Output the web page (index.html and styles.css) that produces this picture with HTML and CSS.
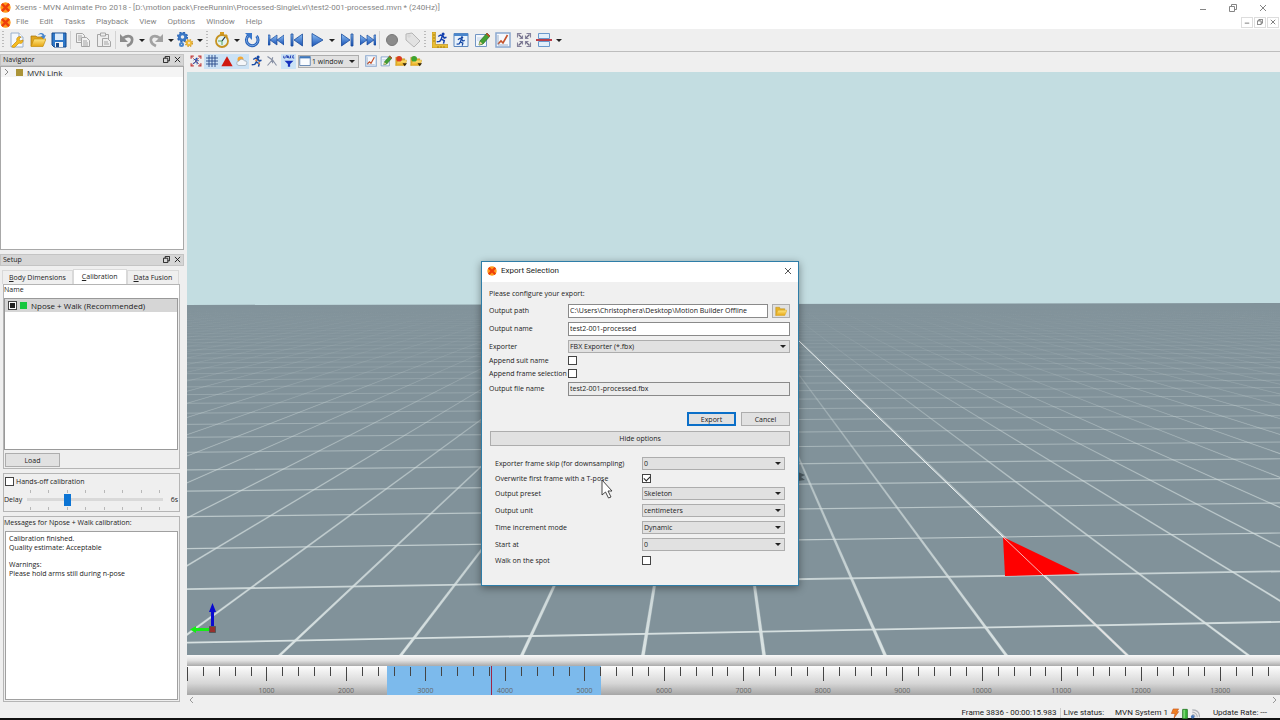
FILE: index.html
```html
<!DOCTYPE html>
<html lang="en">
<head>
<meta charset="utf-8">
<title>Xsens - MVN Animate Pro 2018</title>
<link rel="stylesheet" href="styles.css">
</head>
<body>
<svg class="defs" aria-hidden="true">
  <defs>
    <linearGradient id="blue" x1="0" y1="0" x2="0" y2="1"><stop offset="0" stop-color="#8ec0f5"/><stop offset="1" stop-color="#1650b4"/></linearGradient>
    <linearGradient id="gold" x1="0" y1="0" x2="0" y2="1"><stop offset="0" stop-color="#ffe680"/><stop offset="1" stop-color="#e6a512"/></linearGradient>
  </defs>
  <symbol id="logo" viewBox="0 0 16 16"><circle cx="8" cy="8" r="7.5" fill="#ff9a1c"/><path d="M4 1.500l4 4 4-4 2.500 2.500-4 4 4 4-2.500 2.500-4-4-4 4L1.500 12l4-4-4-4z" fill="#ee3f0c"/></symbol>
  <symbol id="new" viewBox="0 0 16 16"><path d="M2 1h8l4 4v10H2z" fill="#f4f8fd" stroke="#9ab0cc"/><path d="M10 1v4h4" fill="#fff" stroke="#9ab0cc"/><path d="M3 14l5-5c-1-3 1-5 4-4l-2 2 1 2 3-1c0 3-2 4-4 3l-4 4c-1 1-4 0-3-1z" fill="#f5bd22" stroke="#c98a08" stroke-width=".7"/></symbol>
  <symbol id="open" viewBox="0 0 16 16"><path d="M1 14V4h5l1 1h6v3" fill="#e0a51c" stroke="#a57408" stroke-width=".7"/><path d="M1 14.500L4 7h12l-3 7.500z" fill="url(#gold)" stroke="#c28c0c" stroke-width=".7"/><path d="M8 3c2-3 6-2.500 6.500.5L16 3l-2 4-3.500-3 2-.2C12 2 10 2 8 3z" fill="#4686d0"/></symbol>
  <symbol id="folder" viewBox="0 0 16 16"><path d="M1 14V3h5l1 2h6v3" fill="#e6b128" stroke="#b5860f" stroke-width=".6"/><path d="M1 14l3-7h12l-3 7z" fill="url(#gold)" stroke="#d5a020" stroke-width=".6"/></symbol>
  <symbol id="save" viewBox="0 0 16 16"><path d="M1 1h14v14H3l-2-2z" fill="#2f78c8" stroke="#14488c"/><path d="M4 1.500h8V8H4z" fill="#dcebfa"/><path d="M4 10h8v5H4z" fill="#f4f4f4"/><path d="M5 11h3v4H5z" fill="#184a8c"/></symbol>
  <symbol id="copy" viewBox="0 0 16 16"><g fill="#f1f1f1" stroke="#a5a5a5"><path d="M1.500 1.500h6l2 2v7h-8z"/><path d="M6.500 5.500h5l3 3v6h-8z"/><path d="M8 9h4M8 11h5M8 13h5M3 4h4M3 6h3M3 8h3"/></g></symbol>
  <symbol id="paste" viewBox="0 0 16 16"><g fill="#eee" stroke="#a5a5a5"><path d="M1.500 2.500h11v12h-11z"/><path d="M4.500 1h5v3h-5z"/><path d="M6.500 6.500h5l3 3v5h-8z"/><path d="M8 10h4M8 12h5"/></g></symbol>
  <symbol id="undo" viewBox="0 0 16 16"><path d="M4 6c6-4 10-1 9 3-.5 3-3 4-5 5" fill="none" stroke="#8c8c8c" stroke-width="2.600"/><path d="M1 2v8h8z" fill="#8c8c8c"/></symbol>
  <symbol id="redo" viewBox="0 0 16 16"><path d="M12 6C6 2 2 5 3 9c.5 3 3 4 5 5" fill="none" stroke="#a2a2a2" stroke-width="2.600"/><path d="M15 2v8H7z" fill="#a2a2a2"/></symbol>
  <symbol id="gears" viewBox="0 0 16 16"><circle cx="5.500" cy="5" r="3.200" fill="none" stroke="#3a78c6" stroke-width="2.800"/><circle cx="5.500" cy="5" r="4.800" fill="none" stroke="#2c65b4" stroke-width="1.500" stroke-dasharray="2 1.770"/><circle cx="12" cy="11" r="2" fill="none" stroke="#f0bc3c" stroke-width="2.200"/><circle cx="12" cy="11" r="3.400" fill="none" stroke="#d29a26" stroke-width="1.300" stroke-dasharray="1.500 1.200"/><circle cx="4.500" cy="12.500" r="1.500" fill="none" stroke="#4a86cc" stroke-width="2"/></symbol>
  <symbol id="watch" viewBox="0 0 16 16"><path d="M6 0h4v3H6zM12 2l2 2-1 1-2-2z" fill="#d79c1e"/><circle cx="8" cy="9" r="6" fill="#e2f2f0" stroke="#c69220" stroke-width="1.800"/><path d="M8 9l3-4" stroke="#234" stroke-width="1.200"/><path d="M8 9v4M8 9H4" stroke="#58a45c"/></symbol>
  <symbol id="loop" viewBox="0 0 16 16"><path d="M4.500 3.500a5.800 5.800 0 1 0 8 .5" fill="none" stroke="#2861b8" stroke-width="3"/><path d="M4.500 3.500a5.800 5.800 0 1 0 8 .5" fill="none" stroke="#78a9e4" stroke-width="1"/><path d="M1 1h7v7z" fill="#3a78cc"/></symbol>
  <symbol id="first" viewBox="0 0 16 16"><path d="M0 3h2v10H0zM9 3v10L2 8zM16 3v10L9 8z" fill="url(#blue)" stroke="#1b4c9c" stroke-width=".7"/></symbol>
  <symbol id="prev" viewBox="0 0 16 16"><path d="M2 2h2v12H2zM13.500 2v12L5 8z" fill="url(#blue)" stroke="#1b4c9c" stroke-width=".8"/></symbol>
  <symbol id="play" viewBox="0 0 16 16"><path d="M3 1.500v13L14 8z" fill="url(#blue)" stroke="#1b4c9c" stroke-width=".8"/></symbol>
  <symbol id="next" viewBox="0 0 16 16"><path d="M12 2h2v12h-2zM2.500 2v12L11 8z" fill="url(#blue)" stroke="#1b4c9c" stroke-width=".8"/></symbol>
  <symbol id="last" viewBox="0 0 16 16"><path d="M14 3h2v10h-2zM7 3v10l7-5zM0 3v10l7-5z" fill="url(#blue)" stroke="#1b4c9c" stroke-width=".7"/></symbol>
  <symbol id="rec" viewBox="0 0 16 16"><circle cx="8" cy="8" r="5.500" fill="#8b8b8b" stroke="#777"/></symbol>
  <symbol id="tag" viewBox="0 0 16 16"><path d="M1 2l6-1 8 8-6 6-8-7z" fill="#e2e2e2" stroke="#b5b5b5"/><circle cx="4" cy="4" r="1" fill="#fff" stroke="#aaa" stroke-width=".5"/></symbol>
  <symbol id="man" viewBox="0 0 16 16"><circle cx="9.500" cy="2.500" r="2"/><path d="M3 6l3-2 3 1 2 3 3-1M8.500 5L7 9.500l4 2-1 4M7 9.500l-2 3-4 .5" fill="none" stroke="currentColor" stroke-width="2"/></symbol>
  <symbol id="ruler" viewBox="0 0 16 16"><path d="M0 0h3.500v12.500H16V16H0z" fill="#e9bd35" stroke="#b68a14" stroke-width=".6"/><path d="M1 3h2M1 6h2M1 9h2M6 14v2M9 14v2M12 14v2" stroke="#8c6808" stroke-width=".7"/><svg x="4" y="0" width="12" height="12" color="#123fae" fill="#123fae"><use href="#man"/></svg></symbol>
  <symbol id="winman" viewBox="0 0 16 16"><path d="M1 1.500h14v13H1z" fill="#e8f2fc" stroke="#5b86bd"/><path d="M1 1.500h14v2.500H1z" fill="#4a86cc"/><svg x="3" y="4" width="10" height="10" color="#1246a4" fill="#1246a4"><use href="#man"/></svg></symbol>
  <symbol id="edit" viewBox="0 0 16 16"><path d="M1.500 2.500h11v12h-11z" fill="#f3f7fc" stroke="#7296c4"/><path d="M3 6h7M3 8h6" stroke="#c4d4e8"/><path d="M5 13l1-4 7-8 3 3-7 8z" fill="#43a033" stroke="#266b1c" stroke-width=".7"/><path d="M5 13l1-3.500 2.500 2z" fill="#f2d09a"/><path d="M13 1l3 3-1 1-3-3z" fill="#d43e2a"/></symbol>
  <symbol id="chart" viewBox="0 0 16 16"><path d="M1 1h14v14H1z" fill="#f6f9fd" stroke="#8ba8cf" stroke-width="1.500"/><path d="M3 12l3-3 2 2 4.500-8" fill="none" stroke="#c4512a" stroke-width="1.600"/><path d="M3 3v10h10" stroke="#7a94b5" fill="none" stroke-width=".7"/></symbol>
  <symbol id="expand" viewBox="0 0 16 16"><path d="M2.500 2.500l4 4M13.500 2.500l-4 4M13.500 13.500l-4-4M2.500 13.500l4-4" stroke="#6d6a84" stroke-width="1.400"/><path d="M1.500 5.500v-4h4M10.500 1.500h4v4M14.500 10.500v4h-4M5.500 14.500h-4v-4M6.500 3.500v3h-3M9.500 3.500v3h3M6.500 12.500v-3h-3M9.500 12.500v-3h3" fill="none" stroke="#85829c" stroke-width="1.100"/></symbol>
  <symbol id="split" viewBox="0 0 16 16"><path d="M2.500 1.500h11v5h-11zM2.500 9.500h11v5h-11z" fill="#e2effa" stroke="#6a98cc"/><path d="M0 8h16" stroke="#b32a36" stroke-width="1.800"/></symbol>
  <symbol id="fitman" viewBox="0 0 16 16"><path d="M1.500 5V1.500H5M11 1.500h3.500V5M14.500 11v3.500H11M5 14.500H1.500V11" fill="none" stroke="#c23a3a" stroke-width="1.600"/><path d="M3 3l10 10M13 3L3 13" stroke="#c64b50"/><svg x="3" y="3" width="10" height="10" color="#1a49a8" fill="#1a49a8"><use href="#man"/></svg></symbol>
  <symbol id="grid" viewBox="0 0 16 16"><path d="M4 0v16M8 0v16M12 0v16M0 4h16M0 8h16M0 12h16" stroke="#26488a" stroke-width="1.200"/></symbol>
  <symbol id="tri" viewBox="0 0 16 16"><path d="M8 1.500L15.500 15H.5z" fill="#cf1910"/></symbol>
  <symbol id="cloud" viewBox="0 0 16 16"><circle cx="6" cy="6" r="4" fill="#f4a732"/><path d="M4 14a3 3 0 0 1 0-6 4 4 0 0 1 7-.5A3.300 3.300 0 0 1 12 14z" fill="#f4f6f9" stroke="#9aa5b2"/></symbol>
  <symbol id="runner" viewBox="0 0 16 16"><g color="#194ba5" fill="#194ba5"><use href="#man"/></g><circle cx="7" cy="7" r="1.500" fill="#f48928"/><circle cx="11" cy="11" r="1.200" fill="#f48928"/></symbol>
  <symbol id="bones" viewBox="0 0 16 16"><path d="M2 2l7 5 5 7M9 3L8 7l-6 7M5 4l3 3 1 4" fill="none" stroke="#8790a4" stroke-width="1.400"/></symbol>
  <symbol id="labels" viewBox="0 0 16 16"><path d="M1 1v3h2M4 4V1h2v3M7.500 1v3h1.500M11 1h-1v3h1M14.500 1H13v3h2" fill="none" stroke="#1b38b0" stroke-width="1.200"/><path d="M2 7.500h12L9.500 12v3.500h-3V12z" fill="#1430bd"/></symbol>
  <symbol id="window" viewBox="0 0 16 16"><path d="M1 2h14v12H1z" fill="#fafcff" stroke="#416ca4"/><path d="M1 2h14v2.500H1z" fill="#3f78bd"/></symbol>
  <symbol id="fred" viewBox="0 0 16 16"><use href="#folder"/><circle cx="5.500" cy="5" r="3.800" fill="#da3c20"/><path d="M10 11h6l-3 4z" fill="#332508"/></symbol>
  <symbol id="fgreen" viewBox="0 0 16 16"><use href="#folder"/><circle cx="5.500" cy="5" r="3.800" fill="#3ca32f"/><path d="M10 11h6l-3 4z" fill="#332508"/></symbol>
  <symbol id="x" viewBox="0 0 8 8"><path d="M1 1l6 6M7 1L1 7" fill="none" stroke="currentColor"/></symbol>
  <symbol id="restore" viewBox="0 0 8 8"><path d="M.5 2.500h5v5h-5zM2.500 2.500v-2h5v5h-2" fill="none" stroke="currentColor"/></symbol>
  <symbol id="min" viewBox="0 0 8 8"><path d="M1 5.500h6" stroke="currentColor"/></symbol>
</svg>

<header class="titlebar">
  <svg class="logo"><use href="#logo"/></svg>
  <span class="grow">Xsens - MVN Animate Pro 2018 - [D:\motion pack\FreeRunnin\Processed-SingleLvl\test2-001-processed.mvn * (240Hz)]</span>
  <div class="winbtns">
    <button aria-label="Minimize"><svg><use href="#min"/></svg></button>
    <button aria-label="Restore"><svg><use href="#restore"/></svg></button>
    <button aria-label="Close"><svg><use href="#x"/></svg></button>
  </div>
</header>
<nav class="menubar">
  <svg class="logo"><use href="#logo"/></svg>
  <div class="menus grow">
    <button>File</button><button>Edit</button><button>Tasks</button><button>Playback</button><button>View</button><button>Options</button><button>Window</button><button>Help</button>
  </div>
  <div class="docbtns">
    <button aria-label="Minimize document"><svg><use href="#min"/></svg></button>
    <button aria-label="Restore document"><svg><use href="#restore"/></svg></button>
    <button aria-label="Close document"><svg><use href="#x"/></svg></button>
  </div>
</nav>
<div class="toolbar">
  <i class="handle first"></i>
  <button aria-label="New"><svg><use href="#new"/></svg></button>
  <button aria-label="Open"><svg><use href="#open"/></svg></button>
  <button aria-label="Save"><svg><use href="#save"/></svg></button>
  <i class="sep"></i>
  <button aria-label="Copy"><svg><use href="#copy"/></svg></button>
  <button aria-label="Paste"><svg><use href="#paste"/></svg></button>
  <i class="sep"></i>
  <button class="drop" aria-label="Undo"><svg><use href="#undo"/></svg></button>
  <button class="drop" aria-label="Redo"><svg><use href="#redo"/></svg></button>
  <button class="drop" aria-label="Process"><svg><use href="#gears"/></svg></button>
  <i class="handle"></i>
  <button class="drop" aria-label="Speed"><svg><use href="#watch"/></svg></button>
  <button aria-label="Loop"><svg><use href="#loop"/></svg></button>
  <i class="sep blank"></i>
  <button aria-label="First frame"><svg><use href="#first"/></svg></button>
  <button aria-label="Previous frame"><svg><use href="#prev"/></svg></button>
  <button class="drop" aria-label="Play"><svg><use href="#play"/></svg></button>
  <button aria-label="Next frame"><svg><use href="#next"/></svg></button>
  <button aria-label="Last frame"><svg><use href="#last"/></svg></button>
  <i class="sep"></i>
  <button aria-label="Record"><svg><use href="#rec"/></svg></button>
  <button aria-label="Marker"><svg><use href="#tag"/></svg></button>
  <i class="handle tight"></i>
  <button aria-label="Dimensions"><svg><use href="#ruler"/></svg></button>
  <button aria-label="Character window"><svg><use href="#winman"/></svg></button>
  <button aria-label="Edit"><svg><use href="#edit"/></svg></button>
  <button aria-label="Graph"><svg><use href="#chart"/></svg></button>
  <button aria-label="Fit"><svg><use href="#expand"/></svg></button>
  <button class="drop" aria-label="Split view"><svg><use href="#split"/></svg></button>
</div>

<main class="workspace">
  <aside class="side">
    <section class="dock nav">
      <h2><span class="grow">Navigator</span><button aria-label="Float Navigator"><svg><use href="#restore"/></svg></button><button aria-label="Close Navigator"><svg><use href="#x"/></svg></button></h2>
      <div class="tree"><div class="node"><svg class="chev" viewBox="0 0 6 8"><path d="M1 1l3 3-3 3" fill="none" stroke="#888"/></svg><i></i>MVN Link</div></div>
    </section>
    <section class="dock setup">
      <h2><span class="grow">Setup</span><button aria-label="Float Setup"><svg><use href="#restore"/></svg></button><button aria-label="Close Setup"><svg><use href="#x"/></svg></button></h2>
      <div class="tabs" role="tablist">
        <button role="tab"><u>B</u>ody Dimensions</button><button role="tab" class="on" aria-selected="true"><u>C</u>alibration</button><button role="tab"><u>D</u>ata Fusion</button>
      </div>
      <div class="group">
        <div class="colname">Name</div>
        <div class="list"><label class="item"><input type="checkbox" class="partial"><i></i>Npose + Walk (Recommended)</label></div>
        <button class="btn load">Load</button>
      </div>
      <div class="group delay">
        <label class="hands"><input type="checkbox">Hands-off calibration</label>
        <div class="sliderrow">
          <label for="delay">Delay</label>
          <div class="slider">
            <div class="ticks"><i></i><i></i><i></i><i></i><i></i><i></i><i></i><i></i></div>
            <input type="range" id="delay" min="0" max="7" value="2">
            <div class="ticks"><i></i><i></i><i></i><i></i><i></i><i></i><i></i><i></i></div>
          </div>
          <output for="delay">6s</output>
        </div>
      </div>
      <div class="group messages">
        <div class="msghead">Messages for Npose + Walk calibration:</div>
        <div class="msgbox"><p>Calibration finished.<br>Quality estimate: Acceptable</p><p>Warnings:<br>Please hold arms still during n-pose</p></div>
      </div>
    </section>
  </aside>

  <section class="stage">
    <div class="viewbar">
      <button class="lead" aria-label="Fit character"><svg><use href="#fitman"/></svg></button>
      <button class="on" aria-label="Grid"><svg><use href="#grid"/></svg></button>
      <button class="on" aria-label="Origin"><svg><use href="#tri"/></svg></button>
      <button class="on" aria-label="Sky"><svg><use href="#cloud"/></svg></button>
      <button aria-label="Character"><svg><use href="#runner"/></svg></button>
      <button aria-label="Skeleton"><svg><use href="#bones"/></svg></button>
      <button class="on labels" aria-label="Labels"><svg><use href="#labels"/></svg></button>
      <div class="select winsel"><svg><use href="#window"/></svg><select aria-label="Layout"><option>1 window</option></select></div>
      <button aria-label="Plot"><svg><use href="#chart"/></svg></button>
      <button aria-label="Edit plot"><svg><use href="#edit"/></svg></button>
      <button aria-label="Load layout"><svg><use href="#fred"/></svg></button>
      <button aria-label="Save layout"><svg><use href="#fgreen"/></svg></button>
    </div>
    <svg class="scene" viewBox="187 72 1093 583" preserveAspectRatio="xMidYMid slice" role="img" aria-label="3D view">
      <defs>
        <linearGradient id="fade" gradientUnits="userSpaceOnUse" x1="0" y1="304" x2="0" y2="655">
          <stop offset="0" stop-color="#d3dede" stop-opacity="0"/><stop offset=".2" stop-color="#d3dede" stop-opacity=".18"/><stop offset=".5" stop-color="#d3dede" stop-opacity=".6"/><stop offset="1" stop-color="#dbe4e4" stop-opacity="1"/>
        </linearGradient>
        <clipPath id="floorclip"><path d="M187 305L1280 303V655H187z"/></clipPath>
      </defs>
      <path d="M187 72h1093v583H187z" fill="#c3dde1"/>
      <path d="M187 305L1280 303V655H187z" fill="#81929a"/>
      <g id="floor" clip-path="url(#floorclip)" fill="url(#fade)" stroke="url(#fade)"></g>
      <path d="M798 340L1003 537" stroke="#f2f6f6"/>
      <path d="M1003 537l77 37-75 2z" fill="#f00"/>
      <path d="M1003 537l40 38 84 80" stroke="#f4e4e4" fill="none" stroke-width=".8"/>
      <path d="M798 472l7 3-4 2 4 3-7 1z" fill="#4c5a60"/>
      <path d="M212 628h-16v-2l-6 3.500 6 3.500v-2h16z" fill="#14ee14"/>
      <path d="M211 627v-15h-2l3.500-9 3.500 9h-2v15z" fill="#0a0ad0"/>
      <path d="M209.500 626.500h6v6h-6z" fill="#96302c" stroke="#555"/>
    </svg>
    <div class="rail"></div>
    <div class="timeline" id="timeline"><div class="selection"></div></div>
    <div class="hscroll"><svg viewBox="0 0 6 8"><path d="M4 1L1 4l3 3" fill="none" stroke="#999"/></svg><svg viewBox="0 0 6 8"><path d="M1 1l3 3-3 3" fill="none" stroke="#999"/></svg></div>
  </section>
</main>
<footer class="status">
  <span class="frame">Frame 3836 - 00:00:15.983</span><span class="live">Live status:</span><span>MVN System 1</span>
  <svg class="bolt" viewBox="0 0 10 12"><path d="M3 1h6L7 4h2L4 11l1-5H1z" fill="#f08022" stroke="#c04a10" stroke-width=".6"/></svg>
  <svg viewBox="0 0 10 12"><path d="M2.500 1.500h5v10h-5z" fill="#3fbb3c" stroke="#257a24"/><path d="M4 2v9" stroke="#aaf0a0"/></svg>
  <svg viewBox="0 0 10 12"><path d="M2 2c5 0 8 3 8 8M2 4.500c3 0 5.500 2.500 5.500 5.500M2 7c2 0 3 1 3 3" fill="none" stroke="#b0b4b8" stroke-width="1.200"/><circle cx="2.500" cy="9.500" r="2" fill="#4878b8"/></svg>
  <span class="rate">Update Rate: ---</span>
</footer>

<div class="dialog" role="dialog" aria-label="Export Selection">
  <div class="dtitle"><svg class="logo"><use href="#logo"/></svg><span class="grow">Export Selection</span><button aria-label="Close dialog"><svg><use href="#x"/></svg></button></div>
  <form class="dbody">
    <p>Please configure your export:</p>
    <div class="fields">
      <label for="path">Output path</label><div class="pathrow"><input type="text" id="path" value="C:\Users\Christophera\Desktop\Motion Builder Offline"><button type="button" class="btn" aria-label="Browse"><svg><use href="#folder"/></svg></button></div>
      <label for="name">Output name</label><input type="text" id="name" value="test2-001-processed">
      <label for="exp">Exporter</label><div class="select"><select id="exp"><option>FBX Exporter (*.fbx)</option></select></div>
      <label for="suit">Append suit name</label><input type="checkbox" id="suit">
      <label for="fsel">Append frame selection</label><input type="checkbox" id="fsel">
      <label for="file">Output file name</label><input type="text" id="file" class="ro" readonly value="test2-001-processed.fbx">
    </div>
    <div class="actions"><button type="button" class="btn default">Export</button><button type="button" class="btn">Cancel</button></div>
    <button type="button" class="btn hide">Hide options</button>
    <div class="options">
      <label for="skip">Exporter frame skip (for downsampling)</label><div class="select"><select id="skip"><option>0</option></select></div>
      <label for="tpose">Overwrite first frame with a T-pose</label><input type="checkbox" id="tpose" checked>
      <label for="preset">Output preset</label><div class="select"><select id="preset"><option>Skeleton</option></select></div>
      <label for="unit">Output unit</label><div class="select"><select id="unit"><option>centimeters</option></select></div>
      <label for="mode">Time increment mode</label><div class="select"><select id="mode"><option>Dynamic</option></select></div>
      <label for="start">Start at</label><div class="select"><select id="start"><option>0</option></select></div>
      <label for="spot">Walk on the spot</label><input type="checkbox" id="spot">
    </div>
  </form>
</div>
<svg class="cursor" viewBox="0 0 12 20"><path d="M1 1v15l3.500-3 3 6 2.500-1-3-6H11z" fill="#fff" stroke="#333" stroke-width=".9"/></svg>
<script src="app.js"></script>
</body>
</html>
```

FILE: app.js
```js
// Floor grid: one set of lines meets at a vanishing point, the other tilts slightly.
const NS = 'http://www.w3.org/2000/svg';
const floor = document.getElementById('floor');
const vp = { x: 709, y: 253 };
function add(d, width) {
  const p = document.createElementNS(NS, 'path');
  p.setAttribute('d', d);
  p.setAttribute('stroke-width', width);
  floor.appendChild(p);
}
for (let i = -30; i <= 40; i++) {
  const x = 280 + i * 121;
  const half = 1.6;
  add(`M${vp.x} ${vp.y}L${x - half} 655H${x + half}z`, 0.3);
}
for (let k = 0; k < 44; k++) {
  const y = vp.y + 1 / (0.002604 + 0.000414 * k);
  const slope = -(y - 267) * 0.0000513;
  const a = y + slope * (187 - 481);
  const b = y + slope * (1280 - 481);
  add(`M187 ${a}L1280 ${b}`, k < 2 ? 1.8 : k < 6 ? 1.2 : 1);
}

// Timeline ruler: a labelled mark every 1000 frames, five ticks in each.
const timeline = document.getElementById('timeline');
for (let n = 0; n <= 13; n++) {
  const unit = document.createElement('div');
  unit.className = 'unit';
  unit.innerHTML = '<i></i><i></i><i></i><i></i><i></i>' + (n ? '<span>' + n * 1000 + '</span>' : '');
  timeline.appendChild(unit);
}
const head = document.createElement('div');
head.className = 'playhead';
timeline.appendChild(head);
```

FILE: styles.css
```css
* { box-sizing: border-box; }
body {
  margin: 0; min-height: 100vh; display: flex; flex-direction: column;
  background: #efefef; color: #222; position: relative; overflow: hidden;
  font: 7px/9px "Open Sans", "Noto Sans", sans-serif;
}
button, input, select { font: inherit; color: inherit; margin: 0; padding: 0; }
button { border: 0; background: none; display: flex; align-items: center; justify-content: center; }
svg { flex: none; display: block; }
.defs { position: absolute; width: 0; height: 0; }
.grow { flex: 1; min-width: 0; }
.logo { width: 11px; height: 11px; }

.titlebar { display: flex; align-items: center; gap: 4px; height: 15px; background: #fff; color: #858585; font: 8px/10px Roboto, "Open Sans", sans-serif; white-space: nowrap; }
.winbtns { display: flex; gap: 22px; padding-right: 13px; }
.winbtns svg { width: 8px; height: 8px; }
.menubar { display: flex; align-items: center; height: 14px; background: #fff; color: #858585; font: 8px/10px Roboto, "Open Sans", sans-serif; }
.menus { display: flex; gap: 11px; padding-left: 5px; }
.docbtns { display: flex; gap: 1px; padding-right: 1px; }
.docbtns button { width: 12px; height: 11px; border: 1px solid #ddd; color: #555; }
.docbtns svg { width: 6px; height: 6px; }

.toolbar { display: flex; align-items: center; gap: 4px; height: 23px; border-bottom: 1px solid #bdbdbd; padding-left: 2px; }
.toolbar button { width: 17px; height: 18px; }
.toolbar svg { width: 16px; height: 16px; }
.toolbar .drop { width: 25px; justify-content: flex-start; gap: 4px; }
.drop::after, .select::after { content: ""; border: 3px solid transparent; border-top-color: #222; border-bottom: 0; }
.sep { width: 1px; height: 18px; background: #d2d2d2; margin: 0 -1px; }
.blank { background: none; }
.handle { width: 4px; height: 18px; background: repeating-linear-gradient(#bbb 0 1px, transparent 1px 3px); background-size: 2px 100%; background-repeat: no-repeat; }
.handle.first { width: 2px; }
.handle.tight { margin: 0 -1px; }

.workspace { flex: 1; display: flex; min-height: 0; }
.side { width: 184px; margin-right: 3px; display: flex; flex-direction: column; gap: 4px; padding: 2px 0 4px; }
.dock h2 { margin: 0; height: 12px; display: flex; align-items: center; gap: 4px; background: #d6d6d6; border: 1px solid #c4c4c4; padding: 0 2px 1px; font-size: 7px; font-weight: 400; }
.dock h2 svg { width: 7px; height: 7px; color: #111; }
.nav { height: 196px; display: flex; flex-direction: column; }
.tree { flex: 1; background: #fff; border: 1px solid #a8a8a8; }
.node { display: flex; align-items: center; height: 10px; background: #f4f4f4; padding-left: 3px; font-size: 8px; }
.chev { width: 6px; height: 8px; margin-right: 6px; }
.node i { width: 7px; height: 7px; background: #ab9438; margin-right: 4px; }
.setup { flex: 1; display: flex; flex-direction: column; }
.tabs { display: flex; align-items: flex-end; padding: 3px 2px 0; }
.tabs button { height: 14px; padding: 0 6px 1px; border: 1px solid #d9d9d9; border-bottom: 0; }
.tabs .on { height: 15px; background: #fff; padding: 0 8px 2px; }
.group { margin: 0 4px 4px 3px; border: 1px solid #b5b5b5; }
.colname { height: 13px; background: #fff; }
.list { height: 152px; margin-right: 1px; background: #fff; border: 1px solid #999; }
.item { display: flex; align-items: center; height: 13px; background: #d6d6d6; padding-left: 3px; font-size: 8px; }
.item i { width: 7px; height: 7px; background: #16c740; margin: 0 4px 0 3px; }
.btn { border: 1px solid #adadad; background: #e1e1e1; height: 14px; }
.load { width: 55px; margin: 3px 1px 1px; }
input[type=checkbox] { appearance: none; flex: none; width: 9px; height: 9px; background: #fff; border: 1px solid #444; }
input.partial { background: #222; box-shadow: inset 0 0 0 1px #fff; }
.hands { display: flex; align-items: center; height: 14px; gap: 2px; padding-left: 1px; }
.sliderrow { display: flex; align-items: center; height: 23px; }
.sliderrow label { width: 23px; }
.slider { width: 136px; display: flex; flex-direction: column; }
.ticks { display: flex; justify-content: space-between; padding: 0 3px; }
.ticks i { width: 1px; height: 3px; background: #b8b8b8; }
.slider input { appearance: none; width: 100%; height: 14px; background: linear-gradient(#d9d9d9 0 0) center / 100% 3px no-repeat; }
.slider input::-webkit-slider-thumb { appearance: none; width: 7px; height: 12px; background: #0b74d4; }
output { flex: 1; text-align: right; padding-right: 1px; }
.messages { flex: 1; margin-bottom: 0; display: flex; flex-direction: column; }
.msghead { height: 14px; line-height: 12px; white-space: nowrap; }
.msgbox { flex: 1; margin: 0 1px 1px; background: #fff; border: 1px solid #a0a0a0; padding: 2px 3px; }
.msgbox p { margin: 0 0 8px; }

.stage { flex: 1; min-width: 0; display: flex; flex-direction: column; }
.viewbar { display: flex; align-items: center; height: 20px; padding: 0 1px 2px; }
.viewbar button { width: 15px; height: 15px; }
.viewbar svg { width: 12px; height: 12px; }
.viewbar .lead { margin-right: 1px; }
.viewbar .on { background: #cbe2f5; }
.viewbar .labels { margin: 0 2px; }
.select { position: relative; display: flex; align-items: center; height: 13px; border: 1px solid #adadad; background: #e1e1e1; }
.select::after { position: absolute; right: 3px; pointer-events: none; }
.select select { appearance: none; border: 0; background: none; width: 100%; height: 11px; line-height: 11px; padding-left: 1px; }
.winsel { width: 61px; margin-right: 4px; }
.winsel svg { margin: 0; }
.scene { flex: 1; min-height: 0; width: 100%; }
.rail { height: 11px; background: linear-gradient(#f8f8f8, #e0e0e0 50%, #aaa); }
.timeline { position: relative; display: flex; height: 29px; overflow: hidden; background: linear-gradient(#fcfcfc, #d6d6d6 60%, #a6a6a6); }
.selection { position: absolute; inset: 0 auto 0 18.3%; width: 19.6%; background: #7cbaec; }
.playhead { position: absolute; inset: 0 auto 0 27.8%; width: 1px; background: #a02545; }
.unit { position: relative; flex: none; width: calc(100% / 13.75); display: flex; }
.unit i { flex: 1; height: 9px; margin-top: 1px; border-left: 1px solid #444; }
.unit i:first-child { height: 14px; }
.unit span { position: absolute; left: -20px; bottom: 0; width: 40px; text-align: center; color: #666; }
.hscroll { height: 11px; display: flex; justify-content: space-between; padding: 1px 2px; }
.hscroll svg { width: 6px; height: 8px; }

.status { height: 14px; display: flex; align-items: center; justify-content: flex-end; padding: 2px 13px 0 0; border-bottom: 2px solid #111; font: 8px/10px Roboto, "Open Sans", sans-serif; white-space: nowrap; }
.status svg { width: 10px; height: 11px; }
.frame { padding-right: 3px; border-right: 1px solid #ccc; }
.live { padding: 0 11px 0 3px; }
.rate { margin-left: 13px; }
.status .bolt { margin-left: 2px; }

.dialog { position: absolute; left: calc(50% - 159px); top: 261px; width: 318px; height: 325px; background: #f0f0f0; border: 1px solid #2e7da8; box-shadow: 0 2px 8px rgba(0, 0, 0, .4); }
.dtitle { display: flex; align-items: center; gap: 4px; height: 20px; padding: 0 6px 2px 5px; background: #fff; font: 8px/10px Roboto, "Open Sans", sans-serif; }
.dtitle svg { width: 10px; height: 10px; }
.dtitle button { color: #555; }
.dtitle button svg { width: 8px; height: 8px; }
.dbody { padding: 7px 8px 7px 7px; }
.dbody p { margin: 0 0 4px; }
.dbody label { white-space: nowrap; }
.fields { display: grid; grid-template-columns: 79px 1fr; grid-template-rows: 17px 19px 16px 13px 12px 19px; align-items: center; }
.dbody input[type=text] { width: 100%; min-width: 0; height: 14px; border: 1px solid #8a8a8a; background: #fff; padding: 0 1px; }
.dbody input.ro { background: #ececec; }
.pathrow { display: flex; gap: 4px; }
.pathrow .btn { width: 18px; flex: none; }
.pathrow svg { width: 12px; height: 12px; }
.actions { display: flex; justify-content: flex-end; gap: 5px; padding: 14px 0 5px; }
.actions .btn { width: 49px; }
.btn.default { border: 2px solid #0b6fc8; }
.hide { width: calc(100% - 1px); margin-left: 1px; height: 15px; }
.options { display: grid; grid-template-columns: 147px 143px; grid-template-rows: 16px 14px 16px 18px 17px 17px 14px; align-items: center; padding: 9px 0 0 6px; }
#tpose:checked { position: relative; }
#tpose:checked::after { content: ""; position: absolute; left: 2px; top: 0; width: 3px; height: 5px; border: solid #222; border-width: 0 1px 1px 0; transform: rotate(45deg); }
.cursor { position: absolute; left: calc(50% - 39px); top: 479px; width: 12px; height: 20px; }
```
